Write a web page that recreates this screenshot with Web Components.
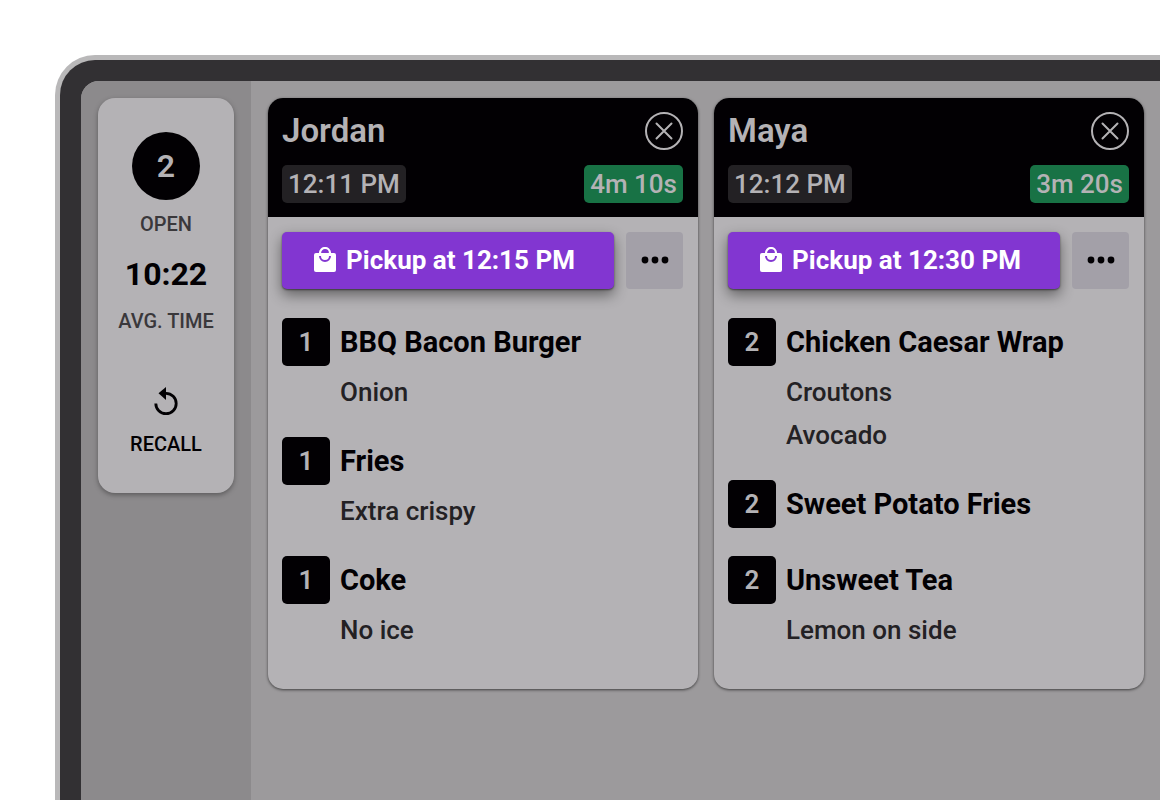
<!DOCTYPE html>
<html lang="en">
<head>
<meta charset="utf-8">
<title>Kitchen display</title>
<style>
    body {
        margin: 0;
        background: #fff;
        font-family: Roboto, "Liberation Sans", sans-serif;
        overflow: hidden;
    }
</style>
</head>
<body>
<kitchen-display>
    <order-summary slot="summary" data-open="2" data-average="10:22"></order-summary>
    <order-ticket data-name="Jordan" data-time="12:11 PM" data-elapsed="4m 10s" data-pickup="12:15 PM">
        <order-item data-quantity="1" data-name="BBQ Bacon Burger"><li>Onion</li></order-item>
        <order-item data-quantity="1" data-name="Fries"><li>Extra crispy</li></order-item>
        <order-item data-quantity="1" data-name="Coke"><li>No ice</li></order-item>
    </order-ticket>
    <order-ticket data-name="Maya" data-time="12:12 PM" data-elapsed="3m 20s" data-pickup="12:30 PM">
        <order-item data-quantity="2" data-name="Chicken Caesar Wrap"><li>Croutons</li><li>Avocado</li></order-item>
        <order-item data-quantity="2" data-name="Sweet Potato Fries"></order-item>
        <order-item data-quantity="2" data-name="Unsweet Tea"><li>Lemon on side</li></order-item>
    </order-ticket>
</kitchen-display>

<script>
class KitchenDisplay extends HTMLElement {
    constructor() {
        super();
        this.attachShadow({ mode: 'open' });
    }

    connectedCallback() {
        this.shadowRoot.innerHTML = `
            <style>
                :host {
                    display: block;
                    box-sizing: border-box;
                    min-height: calc(100vh - 55px);
                    margin: 55px 0 0 55px;
                    padding: 5px 0 0 5px;
                    border-radius: 40px 0 0 0;
                    background: #b9b8b9;
                }
                .bezel {
                    padding: 21px 0 0 21px;
                    border-radius: 35px 0 0 0;
                    background: #323033;
                }
                .screen {
                    display: grid;
                    grid-template-columns: 170px 1fr;
                    min-height: calc(100vh - 81px);
                    border-radius: 18px 0 0 0;
                    background: #9c9a9c;
                    overflow: hidden;
                }
                aside {
                    padding: 17px;
                    background: #8c8a8c;
                }
                main {
                    display: grid;
                    grid-template-columns: 1fr 1fr;
                    align-items: start;
                    gap: 16px;
                    padding: 17px 16px 17px 17px;
                }
            </style>
            <div class="bezel">
                <div class="screen">
                    <aside><slot name="summary"></slot></aside>
                    <main><slot></slot></main>
                </div>
            </div>
        `;
    }
}

class OrderSummary extends HTMLElement {
    constructor() {
        super();
        this.attachShadow({ mode: 'open' });
    }

    connectedCallback() {
        this.shadowRoot.innerHTML = `
            <style>
                :host {
                    display: flex;
                    flex-direction: column;
                    align-items: center;
                    padding: 34px 0 36px;
                    border-radius: 17px;
                    background: #b4b2b5;
                    box-shadow: 0 2px 5px rgba(0, 0, 0, 0.35);
                    color: #020003;
                }
                .count {
                    width: 68px;
                    border-radius: 50%;
                    background: #020003;
                    color: #b4b2b5;
                    font-size: 32px;
                    font-weight: 600;
                    line-height: 68px;
                    text-align: center;
                }
                .label {
                    padding-top: 11px;
                    color: #3a383b;
                    font-size: 20px;
                    font-weight: 500;
                    line-height: 26px;
                }
                .average {
                    padding: 18px 0 4px;
                    font-size: 32px;
                    font-weight: 700;
                    line-height: 38px;
                }
                button {
                    display: flex;
                    flex-direction: column;
                    align-items: center;
                    gap: 15px;
                    margin-top: 52px;
                    padding: 0;
                    border: 0;
                    background: none;
                    color: inherit;
                    font: 500 20px/26px Roboto, sans-serif;
                }
            </style>
            <div class="count">${this.dataset.open}</div>
            <div class="label">OPEN</div>
            <div class="average">${this.dataset.average}</div>
            <div class="label">AVG. TIME</div>
            <button type="button">
                <svg width="28" height="30" viewBox="0 0 28 30" fill="none">
                    <path d="M3.8 17.5A10.2 10.2 0 1 0 14 7.3H11" stroke="currentColor" stroke-width="2.8"/>
                    <path d="M14 1v13L6.5 7.3z" fill="currentColor"/>
                </svg>
                RECALL
            </button>
        `;
    }
}

class OrderTicket extends HTMLElement {
    constructor() {
        super();
        this.attachShadow({ mode: 'open' });
    }

    connectedCallback() {
        const { name, time, elapsed, pickup } = this.dataset;

        this.shadowRoot.innerHTML = `
            <style>
                :host {
                    display: block;
                    border-radius: 15px;
                    background: #b4b2b5;
                    box-shadow: 0 1px 3px rgba(0, 0, 0, 0.6);
                    overflow: hidden;
                }
                header {
                    display: grid;
                    gap: 15px;
                    padding: 14px 15px 14px 14px;
                    background: #020003;
                    color: #b4b2b5;
                }
                .row {
                    display: flex;
                    align-items: center;
                    justify-content: space-between;
                }
                h2 {
                    margin: 0;
                    font-size: 33px;
                    font-weight: 600;
                    line-height: 38px;
                }
                button {
                    display: flex;
                    align-items: center;
                    justify-content: center;
                    padding: 0;
                    border: 0;
                    background: none;
                    color: inherit;
                    font: inherit;
                }
                .tag {
                    padding: 0 6px;
                    border-radius: 5px;
                    background: #232124;
                    font-size: 26px;
                    font-weight: 500;
                    line-height: 38px;
                }
                .elapsed {
                    background: #187245;
                }
                .body {
                    padding: 15px 15px 42px 14px;
                }
                .actions {
                    display: grid;
                    grid-template-columns: 1fr 57px;
                    gap: 12px;
                    height: 57px;
                    margin-bottom: 29px;
                }
                .actions button {
                    padding-bottom: 2px;
                }
                .actions .pickup {
                    gap: 9px;
                    padding-right: 8px;
                    border-radius: 5px;
                    background: #8236d1;
                    box-shadow: 0 6px 14px rgba(0, 0, 0, 0.45), 0 1px 2px rgba(0, 0, 0, 0.5);
                    color: #fff;
                    font-size: 26px;
                    font-weight: 700;
                }
                .more {
                    border-radius: 4px;
                    background: #a3a0a8;
                    color: #020003;
                }
                .items {
                    display: grid;
                    gap: 28px;
                }
            </style>
            <header>
                <div class="row">
                    <h2>${name}</h2>
                    <button type="button" aria-label="Close ticket">
                        <svg width="38" height="38" viewBox="0 0 38 38" fill="none" stroke="currentColor" stroke-width="2">
                            <circle cx="19" cy="19" r="18"/>
                            <path d="M11.5 11.5l15 15M26.5 11.5l-15 15" stroke-linecap="round"/>
                        </svg>
                    </button>
                </div>
                <div class="row">
                    <span class="tag">${time}</span>
                    <span class="tag elapsed">${elapsed}</span>
                </div>
            </header>
            <div class="body">
                <div class="actions">
                    <button type="button" class="pickup">
                        <svg width="24" height="26" viewBox="0 0 24 26" fill="none">
                            <path d="M3 6h18a2 2 0 0 1 2 2v15a2 2 0 0 1-2 2H3a2 2 0 0 1-2-2V8a2 2 0 0 1 2-2z" fill="#fff"/>
                            <path d="M7 7V6a5 5 0 0 1 10 0v1" stroke="#fff" stroke-width="2.2"/>
                            <path d="M7 9a5 5 0 0 0 10 0" stroke="#8236d1" stroke-width="2"/>
                        </svg>
                        Pickup at ${pickup}
                    </button>
                    <button type="button" class="more" aria-label="More actions">
                        <svg width="28" height="8" viewBox="0 0 28 8" fill="currentColor">
                            <circle cx="4" cy="4" r="3.4"/>
                            <circle cx="14" cy="4" r="3.4"/>
                            <circle cx="24" cy="4" r="3.4"/>
                        </svg>
                    </button>
                </div>
                <div class="items"><slot></slot></div>
            </div>
        `;
    }
}

class OrderItem extends HTMLElement {
    constructor() {
        super();
        this.attachShadow({ mode: 'open' });
    }

    connectedCallback() {
        this.shadowRoot.innerHTML = `
            <style>
                :host {
                    display: block;
                }
                .item {
                    display: flex;
                    gap: 10px;
                    color: #020003;
                    line-height: 48px;
                }
                .quantity {
                    width: 48px;
                    border-radius: 5px;
                    background: #020003;
                    color: #b4b2b5;
                    font-size: 26px;
                    font-weight: 600;
                    text-align: center;
                }
                h3 {
                    margin: 0;
                    font-size: 29px;
                    font-weight: 700;
                }
                ul {
                    margin: 0;
                    padding: 0 0 0 58px;
                    list-style: none;
                }
                ::slotted(li) {
                    padding-top: 9px;
                    color: #232124;
                    font-size: 26px;
                    font-weight: 500;
                    line-height: 34px;
                }
            </style>
            <div class="item">
                <span class="quantity">${this.dataset.quantity}</span>
                <h3>${this.dataset.name}</h3>
            </div>
            <ul><slot></slot></ul>
        `;
    }
}

window.customElements.define('kitchen-display', KitchenDisplay);
window.customElements.define('order-summary', OrderSummary);
window.customElements.define('order-ticket', OrderTicket);
window.customElements.define('order-item', OrderItem);
</script>
</body>
</html>
